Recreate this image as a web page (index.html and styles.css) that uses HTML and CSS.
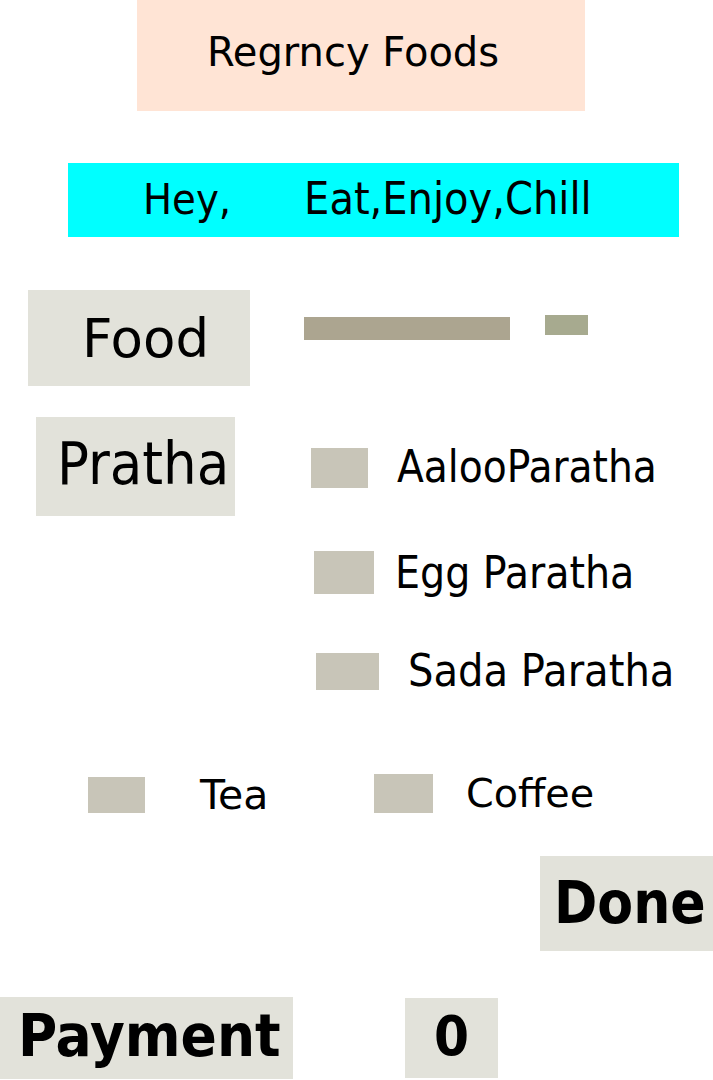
FILE: index.html
```html
<!DOCTYPE html>
<html>
<head>
<meta charset="utf-8">
<link rel="stylesheet" href="styles.css">
</head>
<body>
<div class="page">
  <div class="header">Regrncy Foods</div>
  <div class="tagline"><span class="hey">Hey,</span><span class="motto">Eat,Enjoy,Chill</span></div>

  <div class="food-row">
    <div class="box food">Food</div>
    <div class="bar bar-long"></div>
    <div class="bar bar-short"></div>
  </div>

  <div class="pratha-row">
    <div class="box pratha">Pratha</div>
    <div class="items">
      <div class="item item1"><span class="sq sq1"></span><span class="lbl lbl1">AalooParatha</span></div>
      <div class="item item2"><span class="sq sq2"></span><span class="lbl lbl2">Egg Paratha</span></div>
      <div class="item item3"><span class="sq sq3"></span><span class="lbl lbl3">Sada Paratha</span></div>
    </div>
  </div>

  <div class="drinks">
    <div class="drink tea"><span class="sq sq-tea"></span><span class="dl dl-tea">Tea</span></div>
    <div class="drink coffee"><span class="sq sq-coffee"></span><span class="dl dl-coffee">Coffee</span></div>
  </div>

  <div class="done-row">
    <div class="box done">Done</div>
  </div>

  <div class="pay-row">
    <div class="box payment">Payment</div>
    <div class="box zero">0</div>
  </div>
</div>
</body>
</html>
```

FILE: styles.css
```css
html, body {
  margin: 0;
  padding: 0;
  background: #ffffff;
}
body {
  font-family: "DejaVu Sans", "Liberation Sans", sans-serif;
  color: #000000;
}
.page {
  width: 713px;
  height: 1080px;
  overflow: hidden;
}
.header {
  margin-left: 137px;
  width: 448px;
  height: 111px;
  background: #ffe4d5;
  display: flex;
  align-items: center;
  justify-content: center;
  font-size: 40px;
  line-height: 1;
  padding: 0 16px 8px 0;
  box-sizing: border-box;
}
.tagline {
  margin: 52px 0 0 68px;
  width: 611px;
  height: 74px;
  background: #00ffff;
  display: flex;
  align-items: center;
  padding: 0 0 2px 75px;
  box-sizing: border-box;
  font-family: "DejaVu Sans Condensed", "DejaVu Sans", sans-serif;
  font-size: 43px;
  line-height: 1;
}
.hey {
  margin-right: 73px;
}
.motto {
  font-size: 44.5px;
}
.box {
  background: #e2e2da;
  display: flex;
  align-items: center;
  box-sizing: border-box;
  line-height: 1;
}
.food-row {
  display: flex;
  align-items: flex-start;
  margin-top: 53px;
}
.food {
  margin-left: 28px;
  width: 222px;
  height: 96px;
  padding-left: 54px;
  font-size: 53px;
}
.bar-long {
  margin: 27px 0 0 54px;
  width: 206px;
  height: 23px;
  background: #aca590;
}
.bar-short {
  margin: 25px 0 0 35px;
  width: 43px;
  height: 20px;
  background: #a7aa8f;
}
.pratha-row {
  display: flex;
  align-items: flex-start;
  margin-top: 31px;
}
.pratha {
  margin-left: 36px;
  width: 199px;
  height: 99px;
  padding: 0 0 6px 21px;
  font-family: "DejaVu Sans Condensed", "DejaVu Sans", sans-serif;
  font-size: 59px;
}
.items {
  display: flex;
  flex-direction: column;
  margin-left: 76px;
  padding-top: 31px;
}
.item {
  display: flex;
  align-items: center;
  font-family: "DejaVu Sans Condensed", "DejaVu Sans", sans-serif;
  line-height: 1;
}
.sq {
  display: block;
  background: #c8c5b8;
  flex: none;
}
.sq1 { width: 57px; height: 40px; }
.sq2 { width: 60px; height: 43px; }
.sq3 { width: 63px; height: 37px; }
.item1 { height: 40px; }
.item2 { height: 43px; margin: 63px 0 0 3px; }
.item3 { height: 37px; margin: 59px 0 0 5px; }
.lbl1 { margin-left: 29px; font-size: 43.6px; }
.lbl2 { margin-left: 21px; font-size: 44px; }
.lbl3 { margin-left: 29px; font-size: 44.6px; }
.drinks {
  display: flex;
  align-items: flex-end;
  margin-top: 84px;
  height: 39px;
}
.drink {
  display: flex;
  align-items: center;
  line-height: 1;
}
.tea { margin-left: 88px; width: 286px; height: 36px; }
.coffee { height: 39px; }
.sq-tea { width: 57px; height: 36px; }
.sq-coffee { width: 59px; height: 39px; }
.dl { font-size: 39.7px; }
.dl-tea { margin-left: 55px; font-size: 41px; }
.dl-coffee { margin-left: 33px; }
.done-row {
  display: flex;
  justify-content: flex-end;
  margin-top: 43px;
}
.done {
  width: 173px;
  height: 95px;
  padding: 0 0 2px 14px;
  font-family: "DejaVu Sans Condensed", "DejaVu Sans", sans-serif;
  font-weight: bold;
  font-size: 58px;
}
.pay-row {
  display: flex;
  align-items: flex-start;
  margin-top: 46px;
}
.payment {
  width: 293px;
  height: 82px;
  padding: 0 0 5px 18px;
  font-family: "DejaVu Sans Condensed", "DejaVu Sans", sans-serif;
  font-weight: bold;
  font-size: 59.5px;
}
.zero {
  margin: 1px 0 0 112px;
  width: 93px;
  height: 80px;
  padding-bottom: 4px;
  justify-content: center;
  font-family: "DejaVu Sans Condensed", "DejaVu Sans", sans-serif;
  font-weight: bold;
  font-size: 56px;
}
```
